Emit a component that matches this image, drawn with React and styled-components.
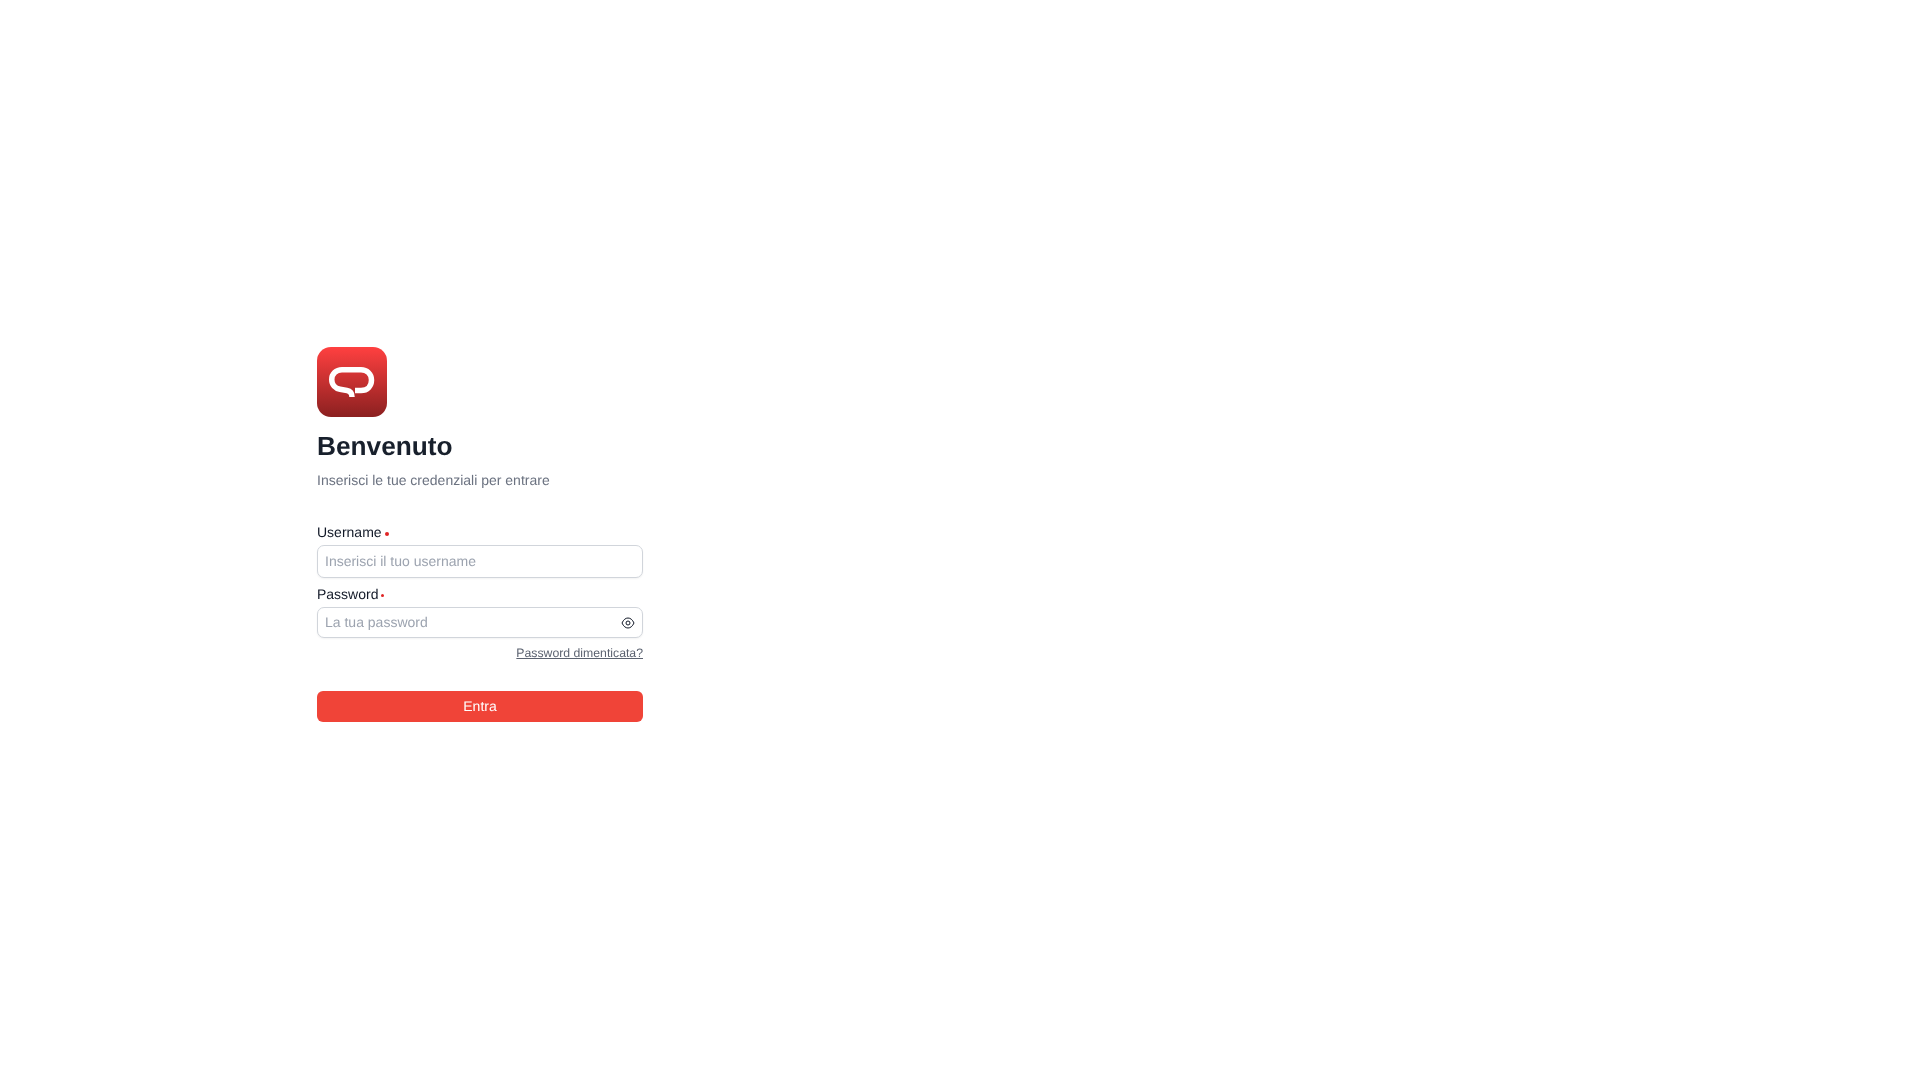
import React from "react";
import styled, { createGlobalStyle } from "styled-components";

const Global = createGlobalStyle`
  html, body { margin: 0; padding: 0; background: #fff; }
  body { font-family: "Liberation Sans", Arial, sans-serif; text-rendering: geometricPrecision; }
  * { box-sizing: border-box; }
  input::placeholder { color: #9ca3af; opacity: 1; }
`;

const Page = styled.main`
  display: grid;
  grid-template-columns: 1fr 1fr;
  height: 1080px;
`;
const Pane = styled.section`
  display: flex;
  justify-content: center;
  align-items: center;
  padding-bottom: 11px;
`;
const Panel = styled.div`
  width: 326px;
  display: flex;
  flex-direction: column;
  will-change: transform;
`;
const LogoBox = styled.div`
  width: 70px;
  height: 70px;
  border-radius: 14px;
  background: linear-gradient(180deg, #ff4040 0%, #8b2020 100%);
  display: flex;
  align-items: center;
  justify-content: center;
`;
const Title = styled.h1`
  margin: 13px 0 0;
  font-size: 26.25px;
  line-height: 32px;
  font-weight: 700;
  color: #18202c;
`;
const Subtitle = styled.p`
  margin: 8px 0 0;
  font-size: 14px;
  line-height: 20px;
  color: #6b7280;
`;
const Form = styled.form`
  margin-top: 32px;
  display: flex;
  flex-direction: column;
`;
const Label = styled.label`
  display: flex;
  align-items: center;
  gap: 3px;
  font-size: 14px;
  line-height: 20px;
  color: #111827;
  margin-top: ${(p) => p.$top || 0}px;
`;
const Dot = styled.span`
  width: ${(p) => p.$size}px;
  height: ${(p) => p.$size}px;
  border-radius: 50%;
  background: #e02424;
  margin-top: 3px;
`;
const Field = styled.div`
  height: ${(p) => p.$h}px;
  margin-top: 3px;
  border: 1px solid #d1d5db;
  border-radius: 7px;
  box-shadow: 0 1px 2px rgba(0, 0, 0, 0.05);
  display: flex;
  align-items: center;
  padding: 0 7px;
  background: #fff;
`;
const Input = styled.input`
  flex: 1;
  min-width: 0;
  border: 0;
  outline: 0;
  padding: 0;
  margin-bottom: 2px;
  background: transparent;
  font: 14px/20px "Liberation Sans", Arial, sans-serif;
  text-rendering: geometricPrecision;
  color: #18202c;
`;
const EyeButton = styled.button`
  border: 0;
  background: none;
  padding: 0;
  display: flex;
  color: #111827;
  margin-top: 1px;
`;
const ForgotRow = styled.div`
  display: flex;
  justify-content: flex-end;
  margin-top: 7px;
`;
const Forgot = styled.a`
  font-size: 12.25px;
  line-height: 16px;
  color: #5b6270;
  text-decoration: underline;
`;
const Submit = styled.button`
  margin-top: 30px;
  height: 31px;
  border: 0;
  border-radius: 6px;
  padding: 0 0 2px;
  background: #f04438;
  color: #fff;
  font: 14px "Liberation Sans", Arial, sans-serif;
  text-rendering: geometricPrecision;
`;

const Logo = () => (
  <svg width="46" height="31" viewBox="0 0 46 31" fill="none">
    <path
      d="M26 23.5 H32 C38.5 23.5 42.5 19 42.5 13 C42.5 7 38 2.75 32 2.75 H13 C7 2.75 2.75 7 2.75 12.5 C2.75 18 6.5 21.5 11 22.3 L18 23.5 C21 24 23 26 23 30"
      stroke="#fff"
      strokeWidth="5.5"
      strokeLinejoin="round"
    />
  </svg>
);

const EyeIcon = () => (
  <svg width="14" height="14" viewBox="0 0 14 14" fill="none" stroke="currentColor" strokeWidth="1">
    <path d="M1 7 C2.6 3.6 4.6 2 7 2 C9.4 2 11.4 3.6 13 7 C11.4 10.4 9.4 12 7 12 C4.6 12 2.6 10.4 1 7Z" />
    <circle cx="7" cy="7" r="2" />
  </svg>
);

export default function App() {
  return (
    <>
      <Global />
      <Page>
        <Pane>
          <Panel>
            <LogoBox>
              <Logo />
            </LogoBox>
            <Title>Benvenuto</Title>
            <Subtitle>Inserisci le tue credenziali per entrare</Subtitle>
            <Form onSubmit={(e) => e.preventDefault()}>
              <Label>
                Username
                <Dot $size={4} />
              </Label>
              <Field $h={33}>
                <Input placeholder="Inserisci il tuo username" />
              </Field>
              <Label $top={6}>
                Password
                <Dot $size={3} />
              </Label>
              <Field $h={31}>
                <Input type="password" placeholder="La tua password" />
                <EyeButton type="button" aria-label="Mostra password">
                  <EyeIcon />
                </EyeButton>
              </Field>
              <ForgotRow>
                <Forgot href="#">Password dimenticata?</Forgot>
              </ForgotRow>
              <Submit type="submit">Entra</Submit>
            </Form>
          </Panel>
        </Pane>
        <Pane />
      </Page>
    </>
  );
}
